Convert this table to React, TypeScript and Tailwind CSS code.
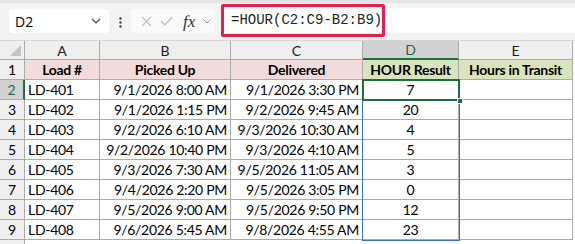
const rows = [
  ["LD-401", "9/1/2026 8:00 AM", "9/1/2026 3:30 PM", "7"],
  ["LD-402", "9/1/2026 1:15 PM", "9/2/2026 9:45 AM", "20"],
  ["LD-403", "9/2/2026 6:10 AM", "9/3/2026 10:30 AM", "4"],
  ["LD-404", "9/2/2026 10:40 PM", "9/3/2026 4:10 AM", "5"],
  ["LD-405", "9/3/2026 7:30 AM", "9/5/2026 11:05 AM", "3"],
  ["LD-406", "9/4/2026 2:20 PM", "9/5/2026 3:05 PM", "0"],
  ["LD-407", "9/5/2026 9:00 AM", "9/5/2026 9:50 PM", "12"],
  ["LD-408", "9/6/2026 5:45 AM", "9/8/2026 4:55 AM", "23"],
];

const cols = ["A", "B", "C", "D", "E"];
const grid = "grid grid-cols-[25px_75px_131px_132px_96px_114px_1fr]";
const cell = "h-[20px] border-r border-b border-[#ababab] flex items-center px-[3px] whitespace-nowrap";

export default function App() {
  return (
    <div
      className="w-[575px] h-[244px] bg-white overflow-hidden text-[14px] tracking-[-0.3px] text-black relative"
      style={{ fontFamily: "Lato, 'Open Sans', sans-serif" }}
    >
      {/* formula bar */}
      <div className="h-[40px] bg-[#f3f3f3] border-t-[3px] border-[#e4e4e4] flex items-start tracking-normal">
        <div className="ml-[9px] mt-[6px] w-[100px] h-[24px] bg-white rounded-[4px] flex items-center justify-between pl-[6px] pr-[8px]">
          <span className="text-[14px]" style={{ fontFamily: "'Open Sans', sans-serif" }}>D2</span>
          <svg width="10" height="6" viewBox="0 0 10 6" fill="none" stroke="#444" strokeWidth="1.2">
            <path d="M1 1l4 4 4-4" />
          </svg>
        </div>
        <div className="w-[22px] h-[24px] mt-[7px] flex items-center justify-center">
          <svg width="3" height="11" viewBox="0 0 3 11" fill="#444">
            <circle cx="1.5" cy="1.5" r="1.2" />
            <circle cx="1.5" cy="5.5" r="1.2" />
            <circle cx="1.5" cy="9.5" r="1.2" />
          </svg>
        </div>
        <div className="mt-[6px] w-[84px] h-[24px] bg-[#fafafa] rounded-[4px] flex items-center pl-[10px] gap-[8px]">
          <svg width="11" height="11" viewBox="0 0 11 11" stroke="#c2c2c2" strokeWidth="1.2">
            <path d="M1 1l9 9M10 1l-9 9" />
          </svg>
          <svg width="13" height="10" viewBox="0 0 13 10" fill="none" stroke="#c2c2c2" strokeWidth="1.2">
            <path d="M1 5l4 4 7-8" />
          </svg>
          <span className="ml-[2px] italic text-[17px] text-[#333] leading-none" style={{ fontFamily: "'Liberation Serif', serif" }}>
            fx
          </span>
          <svg width="8" height="5" viewBox="0 0 8 5" fill="none" stroke="#999" strokeWidth="1">
            <path d="M0.5 0.5l3.5 3.5 3.5-3.5" />
          </svg>
        </div>
        <div className="ml-[7px] mt-[5px] flex-1 h-[25px] bg-white flex items-center pl-[9px]">
          <span className="text-[14px] text-[#222]" style={{ fontFamily: "'Liberation Mono', monospace" }}>
            =HOUR(C2:C9-B2:B9)
          </span>
        </div>
      </div>

      {/* annotation around formula */}
      <div className="absolute left-[221px] top-[4px] w-[164px] h-[33px] border-[3px] border-[#e2204f] rounded-[2px]" />

      {/* column headers */}
      <div className={`${grid} bg-[#efefef] border-t border-[#d6d6d6] tracking-normal`}>
        <div className="h-[19px] border-r border-b border-[#ababab] relative">
          <svg className="absolute right-[3px] bottom-[3px]" width="11" height="11" viewBox="0 0 11 11">
            <path d="M11 0V11H0Z" fill="#c4c4c4" />
          </svg>
        </div>
        {cols.map((c) =>
          c === "D" ? (
            <div key={c} className="h-[19px] bg-[#d2d2d2] border-r border-[#ababab] border-b-2 border-b-[#1e6e42] flex items-center justify-center text-[14px] text-[#1e6e42]">
              {c}
            </div>
          ) : (
            <div key={c} className="h-[19px] border-r border-b border-[#ababab] flex items-center justify-center text-[14px] text-[#222]">
              {c}
            </div>
          )
        )}
        <div className="h-[19px] bg-white" />
      </div>

      {/* row 1 headers */}
      <div className={grid}>
        <div className={`${cell} justify-center bg-[#efefef]`}>1</div>
        <div className={`${cell} justify-center bg-[#f2dcdb] font-bold`}>Load #</div>
        <div className={`${cell} justify-center bg-[#f2dcdb] font-bold`}>Picked Up</div>
        <div className={`${cell} justify-center bg-[#f2dcdb] font-bold`}>Delivered</div>
        <div className={`${cell} justify-center bg-[#d8e4bc] font-bold`}>HOUR Result</div>
        <div className={`${cell} justify-center bg-[#d8e4bc] font-bold`}>Hours in Transit</div>
        <div className="h-[20px] bg-white" />
      </div>

      {rows.map((r, i) => (
        <div key={r[0]} className={grid}>
          {i === 0 ? (
            <div className="h-[20px] bg-[#d2d2d2] border-r-2 border-r-[#1e6e42] border-b border-[#ababab] flex items-center justify-center text-[#1e6e42]">
              {i + 2}
            </div>
          ) : (
            <div className={`${cell} justify-center bg-[#efefef]`}>{i + 2}</div>
          )}
          <div className={cell}>{r[0]}</div>
          <div className={`${cell} justify-end`}>{r[1]}</div>
          <div className={`${cell} justify-end`}>{r[2]}</div>
          <div className={`${cell} justify-center`}>{r[3]}</div>
          <div className={cell} />
          <div className="h-[20px] bg-white" />
        </div>
      ))}

      <div className="w-[25px] h-[10px] bg-[#efefef] border-r border-[#ababab]" />

      {/* range highlight D2:D9 */}
      <div className="absolute left-[362px] top-[80px] w-[98px] h-[161px] border border-[#3b6fd0]" />
      {/* active cell D2 */}
      <div className="absolute left-[362px] top-[79px] w-[98px] h-[22px] border-2 border-[#1e6e42]" />
      <div className="absolute left-[457px] top-[98px] w-[6px] h-[6px] bg-[#1e6e42] border border-white" />
    </div>
  );
}
